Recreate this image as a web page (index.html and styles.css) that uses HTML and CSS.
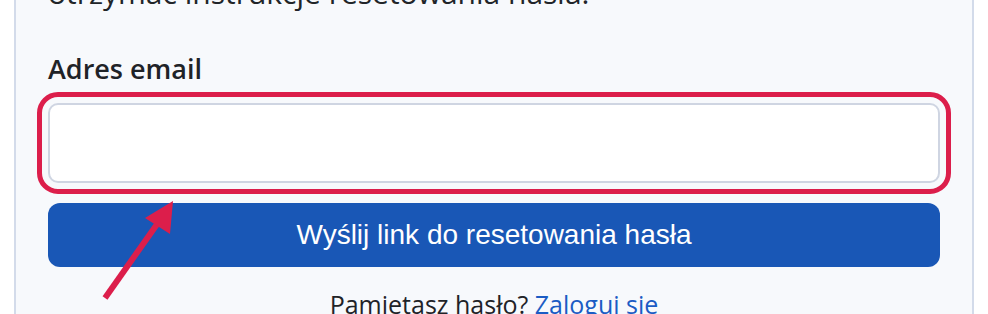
FILE: index.html
```html
<!DOCTYPE html>
<html lang="pl">
<head>
<meta charset="utf-8">
<title>Reset hasła</title>
<link rel="stylesheet" href="styles.css">
</head>
<body>
<div class="card">
  <p class="intro">otrzymać instrukcje resetowania hasła.</p>
  <form class="form">
    <label class="label" for="email">Adres email</label>
    <input class="input" id="email" type="email">
    <button class="btn" type="button">Wyślij link do resetowania hasła</button>
  </form>
  <p class="footer">Pamietasz hasło? <a class="link" href="#">Zaloguj sie</a></p>
</div>
<svg class="arrow" width="988" height="314" viewBox="0 0 988 314" aria-hidden="true">
  <line x1="105" y1="298" x2="160" y2="220" stroke="#dc1e4b" stroke-width="6"/>
  <polygon points="173,201 145,218 170,234" fill="#dc1e4b"/>
</svg>
</body>
</html>
```
FILE: styles.css
```css
html, body {
  margin: 0;
  padding: 0;
}
body {
  position: relative;
  width: 988px;
  height: 314px;
  overflow: hidden;
  background: #ffffff;
  font-family: "Open Sans", "Noto Sans", sans-serif;
  color: #1f2328;
}
.card {
  display: flow-root;
  box-sizing: border-box;
  margin-left: 14px;
  width: 960px;
  height: 340px;
  border: 2px solid #d3dbea;
  border-top: none;
  background: #f7f9fc;
  padding: 0 32px;
}
.intro {
  margin: -25px 0 0;
  font-size: 30px;
  line-height: 36px;
  color: #212529;
  white-space: nowrap;
}
.form {
  display: flex;
  flex-direction: column;
}
.label {
  margin-top: 40px;
  font-size: 27px;
  line-height: 36px;
  font-weight: 600;
  color: #1f2328;
}
.input {
  margin: 16px 0 0;
  box-sizing: border-box;
  height: 80px;
  width: 100%;
  border: 2px solid #cfd5e2;
  border-radius: 10px;
  background: #ffffff;
  outline: 5px solid #dc1e4b;
  outline-offset: 6px;
}
.btn {
  margin-top: 20px;
  height: 64px;
  width: 100%;
  border: none;
  border-radius: 12px;
  background: #1957b6;
  color: #ffffff;
  font-family: "Liberation Sans", Arial, sans-serif;
  font-size: 28px;
}
.footer {
  margin: 19px 0 0;
  text-align: center;
  font-size: 25px;
  line-height: 36px;
  white-space: nowrap;
}
.link {
  color: #1b5cc4;
  text-decoration: none;
}
.arrow {
  position: absolute;
  left: 0;
  top: 0;
  pointer-events: none;
}
```
